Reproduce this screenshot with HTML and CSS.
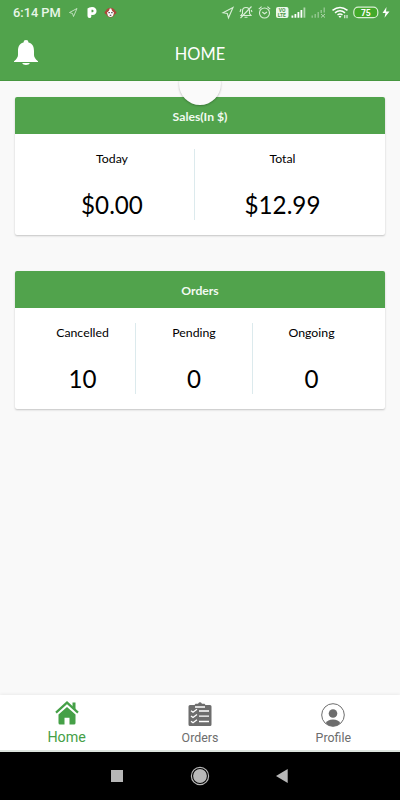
FILE: index.html
```html
<!DOCTYPE html>
<html lang="en">
<head>
<meta charset="utf-8">
<meta name="viewport" content="width=device-width, initial-scale=1">
<title>Home</title>
<link rel="stylesheet" href="styles.css">
</head>
<body>
<div class="screen">
  <div class="status">
    <span class="clock">6:14 PM</span>
    <svg class="left-icons" width="52" height="24" viewBox="66 0 52 24">
      <path d="M77 8.500 69.500 12.500 72.500 13.500 73.500 16.500Z" fill="none" stroke="#c9e5c7" stroke-width=".9"/>
      <path fill="#fff" fill-rule="evenodd" d="M87.500 8.500Q89 7 92 7C98 7 98 15 92.500 15Q91.500 15 91.300 14.800V16.500Q91.300 18 89.500 18Q87.500 18 87.500 16ZM91.500 9.800V12.300H92.500C94 12.300 94 9.800 92.500 9.800Z"/>
      <circle cx="106.300" cy="12.500" r="1.700" fill="#a9493b"/><circle cx="114.700" cy="12.500" r="1.700" fill="#a9493b"/>
      <path fill="#a9493b" d="M106 10Q110.500 5.500 115 10L114.500 15Q110.500 20 106.500 15Z"/>
      <path fill="#fff" d="M107 12.500Q109.500 11 109.800 8.500H111.200Q111.500 11 114 12.500L113 16Q110.500 18 108 16Z"/>
      <path fill="#352b29" d="M108.500 12h1.200v1.300h-1.200zM111.300 12h1.200v1.300h-1.200zM109.700 14.700h1.600v1h-1.600z"/>
    </svg>
    <svg class="right-icons" width="180" height="24" viewBox="220 0 180 24">
      <g fill="none" stroke="#d9efd7" stroke-width="1.100">
        <path d="M233 7.500 223 12.700 227.300 13.500 228.500 17.800Z"/>
        <path d="M241 15.500h10L249.500 13.500V11Q249.500 7.500 246 7.500T242.500 11V13.500ZM244.500 17.300h3M251.500 6.500 240.500 18M240 12l1-3M252 12l-.8-2"/>
        <circle cx="264.500" cy="13" r="5"/><path d="m262.300 12 2.200 1.800 2.500-1.800M258.800 9.200l2.800-2.600M270.200 9.200l-2.800-2.600"/>
      </g>
      <rect x="276" y="7" width="12.500" height="11" rx="2" fill="#ecf8eb"/>
      <g class="volte" fill="#4b9548"><text x="278.800" y="12">VO</text><text x="277.800" y="17">LTE</text></g>
      <path fill="#fff" d="M291.500 15.500h1.800v2.200h-1.800zM294.500 14h1.800v3.700h-1.800zM297.500 12h1.800v5.700h-1.800zM300.500 10h1.800v7.700h-1.800z"/>
      <path fill="#b2d8af" d="M303.500 7.500h1.800v10.200h-1.800z"/>
      <path fill="#8fc58b" d="M311.500 15.500h1.500v2.200h-1.500zM314.500 14h1.500v3.700h-1.500zM317.500 12h1.500v5.700h-1.500zM320.500 10h1.500v3h-1.500zM323.500 7.500h1.500v5h-1.500z"/>
      <path d="m321 14 4 3.500m0-3.500-4 3.500" stroke="#b2d8af"/>
      <g fill="none" stroke="#fff" stroke-width="1.500"><path d="M332.500 10.300Q340 4.500 347.500 10.300M335 12.800Q340 8.800 345 12.800M337.500 15Q340 13 342.500 15"/></g>
      <path fill="#fff" d="m338.500 16.200 1.500 1.800 1.500-1.800q-1.500-1-3 0ZM344.300 15h1v3.200h-1zM346.500 15h1v3.200h-1z"/>
      <rect x="353.800" y="7.200" width="24" height="10.500" rx="4.500" fill="#43a92a" stroke="#d9f0d5" stroke-width="1.200"/>
      <text class="battery" x="365.800" y="15.500" text-anchor="middle" fill="#fff">75</text>
      <path fill="#fff" d="m386.500 7-4 6h3l-1 4.800 5-6.300h-3.500Z"/>
    </svg>
  </div>
  <header class="header">
    <svg class="bell" width="26" height="28" viewBox="0 0 26 28"><path fill="#fff" d="M13 1q2.500 0 2.500 2.400C20 4.700 21 8 21 12v4q0 3 4 6.300v.7H1v-.7Q5 19 5 16v-4c0-4 1-7.300 5.500-8.600Q10.500 1 13 1ZM9 24h8q-1 2-4 2T9 24Z"/></svg>
    <h1>HOME</h1>
    <div class="refresh-clip"><div class="refresh"></div></div>
  </header>
  <main class="content">
    <section class="card">
      <h2>Sales(In $)</h2>
      <div class="stats sales">
        <div class="stat"><span>Today</span><strong>$0.00</strong></div>
        <div class="stat"><span>Total</span><strong>$12.99</strong></div>
      </div>
    </section>
    <section class="card">
      <h2>Orders</h2>
      <div class="stats orders">
        <div class="stat"><span>Cancelled</span><strong>10</strong></div>
        <div class="stat"><span>Pending</span><strong>0</strong></div>
        <div class="stat"><span>Ongoing</span><strong>0</strong></div>
      </div>
    </section>
  </main>
  <nav class="tabs">
    <a class="tab active">
      <svg width="26" height="26" viewBox="0 0 26 26"><path fill="#45a047" d="M4.500 14.500 13 7l8.500 7.500V23q0 1.500-1.500 1.500h-4.500v-6.700h-5v6.700H6Q4.500 24.500 4.500 23Z"/><path d="m2 12.600 11-10 11 10" fill="none" stroke="#45a047" stroke-width="2.200"/><path fill="#45a047" d="M18.500 2.500h3v7l-3-2.700Z"/></svg>
      <span>Home</span>
    </a>
    <a class="tab">
      <svg width="26" height="26" viewBox="0 0 26 26"><path fill="#6d6d6d" d="M3 4h4.500l1-1.300h2.500q2-2.700 4 0h2.500l1 1.300H23q1.500 0 1.500 1.500v18Q24.500 25 23 25H3q-1.500 0-1.500-1.500v-18Q1.500 4 3 4Z"/><path d="M8 6h10M12 10h10M12 15.200h10M12 20.500h10M4 9.700l2 1.500 4-3M4 14.900l2 1.500 4-3M4 20.200l2 1.500 4-3" fill="none" stroke="#fff" stroke-width="1.300"/></svg>
      <span>Orders</span>
    </a>
    <a class="tab">
      <svg width="26" height="26" viewBox="0 0 26 26"><circle cx="13" cy="14" r="11.300" fill="none" stroke="#6d6d6d"/><circle cx="13" cy="12.500" r="4.300" fill="#6d6d6d"/><path fill="#6d6d6d" d="M5.800 22Q7.500 18.500 13 18.500t7.200 3.500Q17.500 25.300 13 25.300T5.800 22Z"/></svg>
      <span>Profile</span>
    </a>
  </nav>
  <div class="system-nav">
    <svg width="400" height="48" viewBox="0 0 400 48"><path fill="#b7b7b7" d="M111 18h12v12h-12ZM287.700 17v14L276 24Z"/><circle cx="200" cy="24" r="6.900" fill="#b7b7b7"/><circle cx="200" cy="24" r="8.600" fill="none" stroke="#b7b7b7" stroke-width="1.200"/></svg>
  </div>
</div>
</body>
</html>
```
FILE: styles.css
```css
* { box-sizing: border-box; }
body { margin: 0; }
.screen { width: 400px; height: 800px; display: flex; flex-direction: column; background: #f9f9f9; font-family: Lato, sans-serif; color: #000; overflow: hidden; }
.status { height: 26px; flex: none; display: flex; background: #51a34c; padding-left: 13px; }
.clock { width: 53px; font: 500 12.8px/26px Roboto, sans-serif; color: #e8f6e7; white-space: nowrap; }
.left-icons { margin-right: 102px; flex: none; }
.right-icons { flex: none; }
.volte { font: bold 5px Roboto, sans-serif; }
.battery { font: bold 8.5px Roboto, sans-serif; }
.header { height: 55px; flex: none; background: #51a34c; display: grid; grid-template-columns: 52px 1fr 52px; position: relative; border-bottom: 1px solid #469640; }
.bell { margin: 13px 0 0 13px; }
h1 { margin: 0; text-align: center; color: #fff; font-weight: 400; font-size: 16.4px; line-height: 56px; }
.refresh-clip { position: absolute; top: 55px; left: 174px; width: 52px; height: 34px; overflow: hidden; }
.refresh { width: 42px; height: 42px; margin: -18px auto 0; border-radius: 50%; background: #fafafa; box-shadow: 0 1px 2px rgba(0,0,0,.25); }
.content { flex: 1; padding: 16px 15px 0; display: flex; flex-direction: column; gap: 36px; }
.card { height: 138px; background: #fff; border-radius: 2px; box-shadow: 0 1px 2px rgba(0,0,0,.22); overflow: hidden; }
h2 { height: 37px; margin: 0; background: #51a34c; color: #f2faf1; text-align: center; font-weight: 700; font-size: 12.2px; line-height: 40px; }
.stats { height: 101px; display: grid; padding: 15px; }
.sales { grid-template-columns: 165px 175px; }
.orders { grid-template-columns: 106px 117px 117px; }
.stat { height: 71px; display: flex; flex-direction: column; align-items: center; }
.stat:not(:last-child) { border-right: 1px solid #dceaed; }
.stat span { font-size: 12.3px; line-height: 20px; }
.stat strong { font-size: 24.2px; line-height: 30px; font-weight: 400; margin-top: 21px; }
.tabs { height: 57px; flex: none; display: grid; grid-template-columns: repeat(3, 1fr); background: #fff; border-bottom: 2px solid #dce4de; box-shadow: 0 -1px 3px rgba(0,0,0,.06); }
.tab { display: flex; flex-direction: column; align-items: center; padding-top: 6px; color: #6d6d6d; font: 12.4px/18px Roboto, sans-serif; }
.tab svg { flex: none; }
.tab span { margin-top: 2px; }
.active { padding-top: 5px; color: #45a047; font-size: 14.3px; }
.system-nav { height: 48px; flex: none; background: #000; }
.system-nav svg { display: block; }
```
